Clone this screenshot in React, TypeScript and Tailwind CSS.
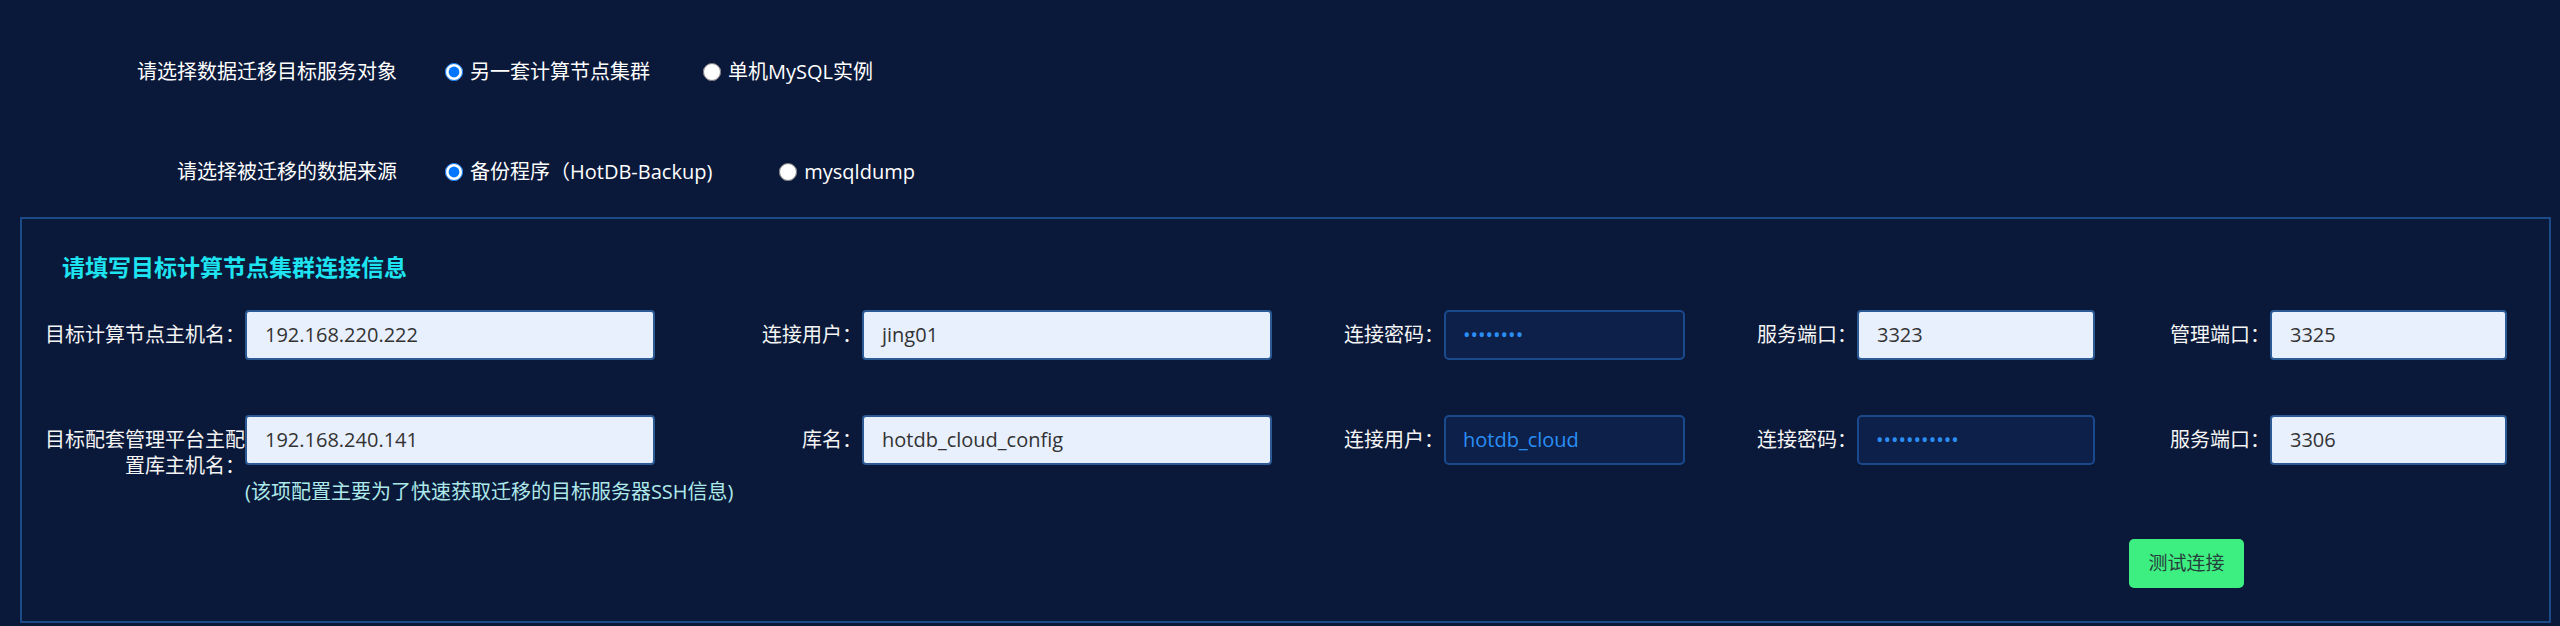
import React from "react";

function Radio({
  name,
  checked,
  label,
  className = "",
}: {
  name: string;
  checked?: boolean;
  label: string;
  className?: string;
}) {
  return (
    <label className={`flex items-center ${className}`}>
      <input
        type="radio"
        name={name}
        defaultChecked={checked}
        className="m-0 w-[18px] h-[18px] accent-[#0075ff]"
      />
      <span className="ml-[7px] text-[20px] leading-[26px] text-white whitespace-nowrap">{label}</span>
    </label>
  );
}

function Label({ className, children }: { className: string; children: React.ReactNode }) {
  return (
    <div className={`shrink-0 text-right text-[20px] leading-[26px] text-[#f4f4f4] ${className}`}>
      {children}
    </div>
  );
}

function Field({ className, children }: { className: string; children: React.ReactNode }) {
  return (
    <div
      className={`h-[50px] shrink-0 rounded-[4px] border-2 border-[#2b5a94] bg-[#e8f0fe] pl-[18px] flex items-center text-[20px] text-[#333333] whitespace-nowrap ${className}`}
    >
      {children}
    </div>
  );
}

function DarkField({ className, children }: { className: string; children: React.ReactNode }) {
  return (
    <div
      className={`h-[50px] shrink-0 rounded-[5px] border-2 border-[#1a4a8c] bg-[#0c2049] pl-[17px] flex items-center text-[20px] text-[#2b8ef5] whitespace-nowrap ${className}`}
    >
      {children}
    </div>
  );
}

export default function App() {
  return (
    <div className="w-[2560px] h-[626px] overflow-hidden bg-[#0a1839] font-['Open_Sans','Noto_Sans_CJK_SC',sans-serif] text-white">
      <div className="pt-[52px]">
        <div className="flex items-center h-[40px]">
          <div className="w-[397px] shrink-0 text-right text-[20px] leading-[26px] text-white">
            请选择数据迁移目标服务对象
          </div>
          <div className="ml-[48px] flex items-center">
            <Radio name="target" checked label="另一套计算节点集群" className="mr-[53px]" />
            <Radio name="target" label="单机MySQL实例" />
          </div>
        </div>
        <div className="flex items-center h-[40px] mt-[60px]">
          <div className="w-[397px] shrink-0 text-right text-[20px] leading-[26px] text-white">
            请选择被迁移的数据来源
          </div>
          <div className="ml-[48px] flex items-center">
            <Radio name="source" checked label="备份程序（HotDB-Backup)" className="mr-[67px]" />
            <Radio name="source" label="mysqldump" />
          </div>
        </div>
      </div>

      <div className="mt-[25px] ml-[20px] mr-[9px] h-[406px] border-2 border-[#1b4a86]">
        <div className="pt-[33px] pl-[40px] text-[23px] leading-[30px] font-bold text-[#1ee3f0]">
          请填写目标计算节点集群连接信息
        </div>

        <div className="mt-[28px] flex items-center">
          <Label className="w-[223px]">目标计算节点主机名：</Label>
          <Field className="w-[410px]">192.168.220.222</Field>
          <Label className="w-[207px]">连接用户：</Label>
          <Field className="w-[410px]">jing01</Field>
          <Label className="w-[172px]">连接密码：</Label>
          <DarkField className="w-[241px]">••••••••</DarkField>
          <Label className="w-[172px]">服务端口：</Label>
          <Field className="w-[238px]">3323</Field>
          <Label className="w-[175px]">管理端口：</Label>
          <Field className="w-[237px]">3325</Field>
        </div>

        <div className="mt-[55px] flex items-start">
          <Label className="w-[223px] mt-[12px] pl-[23px]">目标配套管理平台主配置库主机名：</Label>
          <div className="w-[410px] shrink-0 flex flex-col">
            <Field className="w-[410px]">192.168.240.141</Field>
            <div className="mt-[14px] text-[20px] leading-[25px] text-[#aee9ea] whitespace-nowrap">
              (该项配置主要为了快速获取迁移的目标服务器SSH信息)
            </div>
          </div>
          <Label className="w-[207px] mt-[12px]">库名：</Label>
          <Field className="w-[410px]">hotdb_cloud_config</Field>
          <Label className="w-[172px] mt-[12px]">连接用户：</Label>
          <DarkField className="w-[241px]">hotdb_cloud</DarkField>
          <Label className="w-[172px] mt-[12px]">连接密码：</Label>
          <DarkField className="w-[238px]">•••••••••••</DarkField>
          <Label className="w-[175px] mt-[12px]">服务端口：</Label>
          <Field className="w-[237px]">3306</Field>
        </div>

        <div className="mt-[35px] flex justify-end pr-[305px]">
          <button className="w-[115px] h-[49px] rounded-[5px] bg-[#3def80] text-[19px] text-[#26403c] flex items-center justify-center">
            测试连接
          </button>
        </div>
      </div>
    </div>
  );
}
